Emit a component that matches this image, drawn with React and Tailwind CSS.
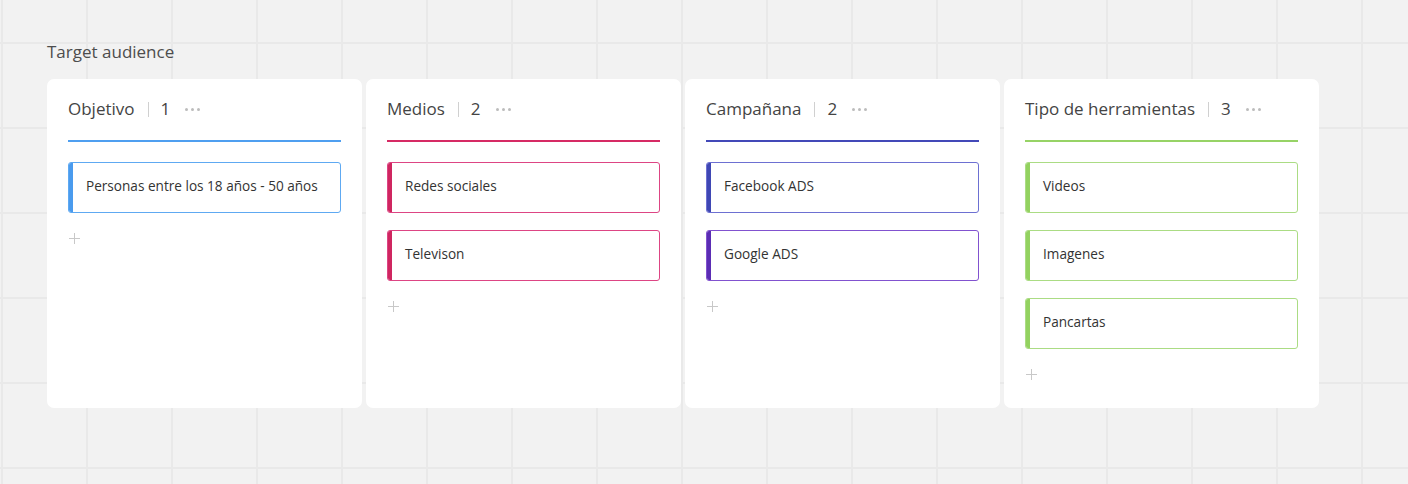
import React from "react";

const columns = [
  {
    title: "Objetivo",
    count: 1,
    line: "bg-[#4f9ff0]",
    items: [
      { text: "Personas entre los 18 años - 50 años", bar: "bg-[#4a9bee]", border: "border-[#5ea9f2]" },
    ],
  },
  {
    title: "Medios",
    count: 2,
    line: "bg-[#d62a64]",
    items: [
      { text: "Redes sociales", bar: "bg-[#cf2660]", border: "border-[#dd4584]" },
      { text: "Televison", bar: "bg-[#cf2660]", border: "border-[#dd4584]" },
    ],
  },
  {
    title: "Campañana",
    count: 2,
    line: "bg-[#4349b8]",
    items: [
      { text: "Facebook ADS", bar: "bg-[#3f47b4]", border: "border-[#6d70d2]" },
      { text: "Google ADS", bar: "bg-[#5b2db4]", border: "border-[#8152cf]" },
    ],
  },
  {
    title: "Tipo de herramientas",
    count: 3,
    line: "bg-[#97d366]",
    items: [
      { text: "Videos", bar: "bg-[#93d260]", border: "border-[#abdc84]" },
      { text: "Imagenes", bar: "bg-[#93d260]", border: "border-[#abdc84]" },
      { text: "Pancartas", bar: "bg-[#93d260]", border: "border-[#abdc84]" },
    ],
  },
];

function Column({ col }) {
  return (
    <div className="w-[315px] h-[329px] bg-white rounded-[7px] px-[21px] pt-[19px] shrink-0">
      <div className="flex items-center h-[22px]">
        <span className="text-[17px] leading-[22px] text-[#444]">{col.title}</span>
        <span className="ml-[13px] w-px h-[15px] bg-[#d0d0d0]" />
        <span className="ml-[12px] text-[17px] leading-[22px] text-[#444]">{col.count}</span>
        <span className="ml-[15px] flex items-center gap-[3px]">
          <span className="w-[3px] h-[3px] rounded-full bg-[#bcbcbc]" />
          <span className="w-[3px] h-[3px] rounded-full bg-[#bcbcbc]" />
          <span className="w-[3px] h-[3px] rounded-full bg-[#bcbcbc]" />
        </span>
      </div>
      <div className={`mt-[20px] h-[2px] ${col.line}`} />
      <div className="mt-[20px] flex flex-col gap-[17px]">
        {col.items.map((it) => (
          <div
            key={it.text}
            className={`relative h-[51px] rounded-[3px] border ${it.border} flex items-center pl-[17px] pb-[2px] overflow-hidden`}
          >
            <span className={`absolute left-0 top-0 bottom-0 w-[4px] ${it.bar}`} />
            <span className="text-[13.6px] text-[#333]">{it.text}</span>
          </div>
        ))}
      </div>
      <div className="mt-[20px] ml-[1px] relative w-[11px] h-[11px]">
        <span className="absolute left-[5px] top-0 w-px h-[11px] bg-[#c8c8c8]" />
        <span className="absolute top-[5px] left-0 h-px w-[11px] bg-[#c8c8c8]" />
      </div>
    </div>
  );
}

export default function App() {
  return (
    <div
      className="w-full min-h-screen h-[484px] bg-[#f2f2f2] bg-[linear-gradient(#e9e9e9_2px,transparent_2px),linear-gradient(90deg,#e9e9e9_2px,transparent_2px)] bg-[length:85px_85px] bg-[position:1px_42px] pl-[47px] pt-[40px]"
      style={{ fontFamily: '"Open Sans", "Noto Sans", sans-serif' }}
    >
      <div className="text-[17px] leading-[23px] text-[#4d4d4d]">Target audience</div>
      <div className="mt-[16px] flex gap-[4px]">
        {columns.map((c) => (
          <Column key={c.title} col={c} />
        ))}
      </div>
    </div>
  );
}
